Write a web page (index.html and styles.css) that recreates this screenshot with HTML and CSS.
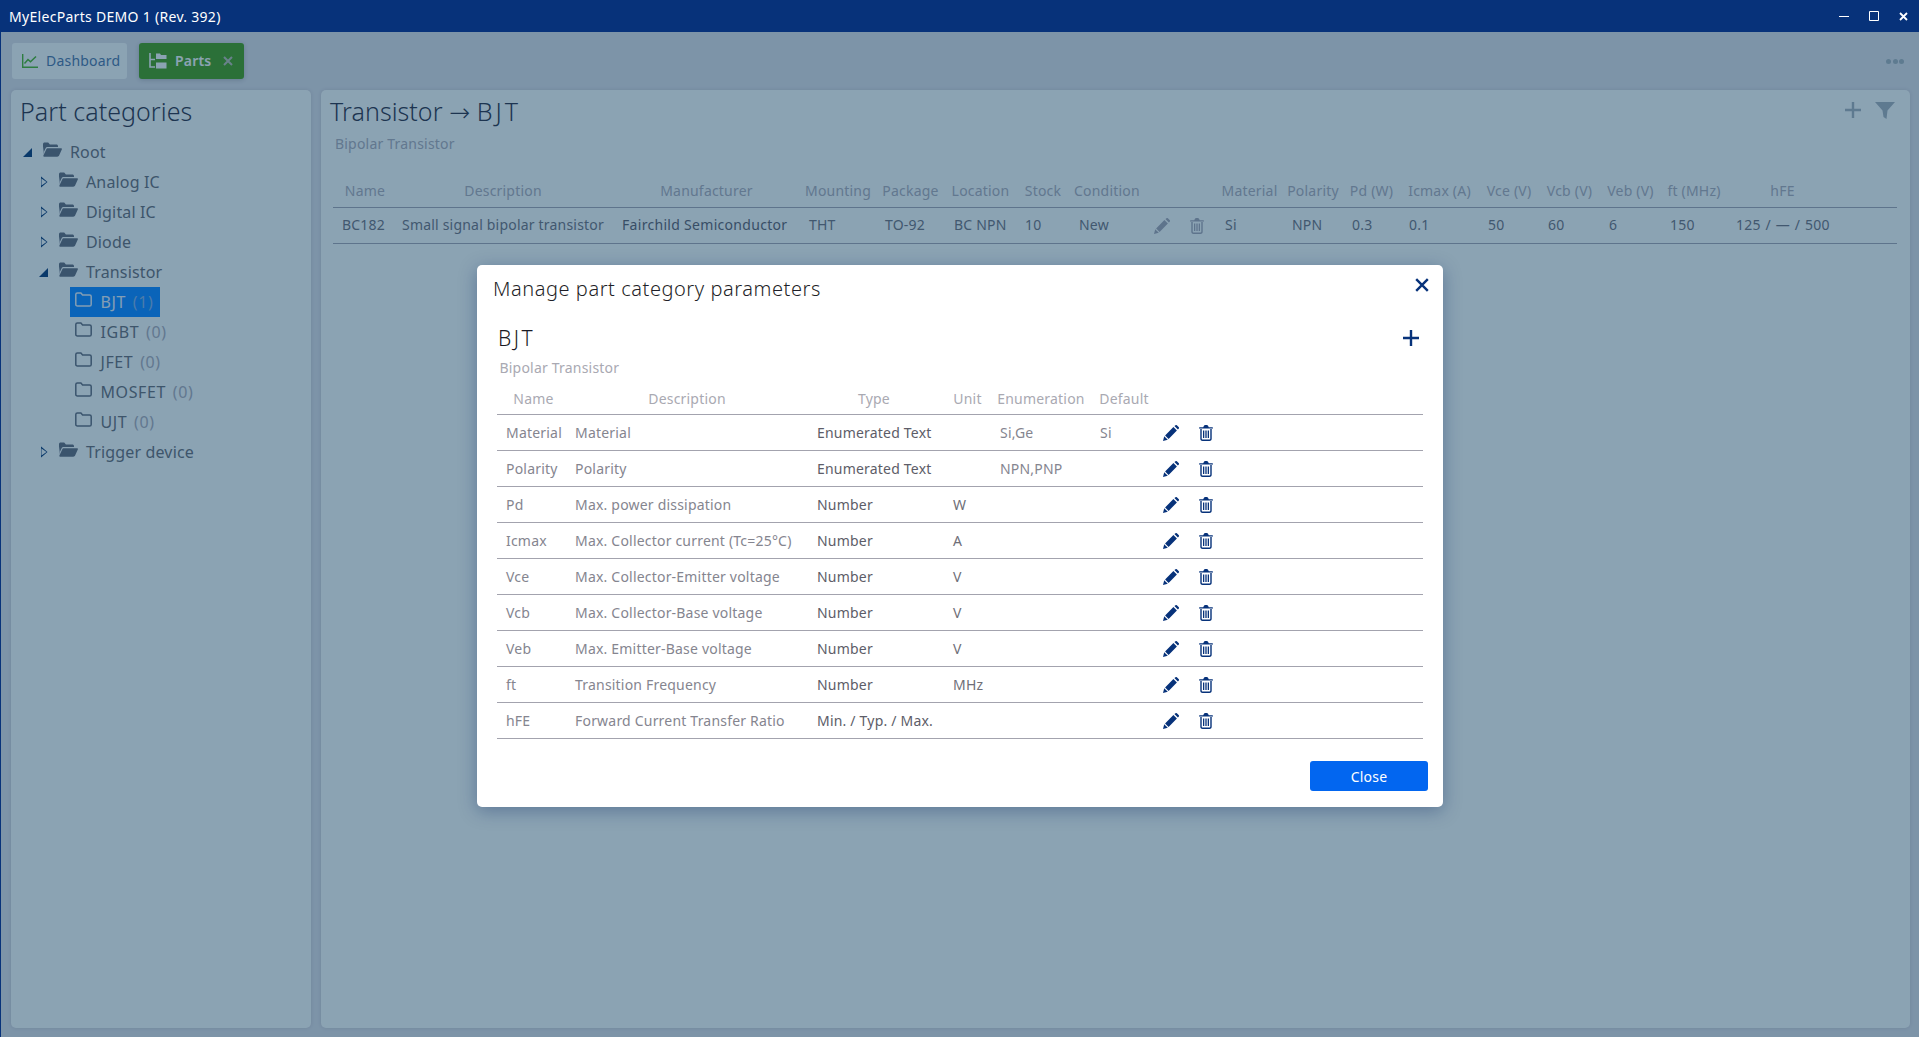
FILE: index.html
```html
<!DOCTYPE html>
<html lang="en">
<head>
  <meta charset="UTF-8" />
  <title>MyElecParts</title>
  <link rel="stylesheet" href="styles.css">
</head>
<body>
  <svg class="icon-defs" aria-hidden="true">
    <symbol id="icon-pencil" viewBox="0 0 16 16">
      <path d="M0 16 1.200 11.200 4.800 14.800Z M2.100 10.400 10.400 2.100 13.900 5.600 5.600 13.900Z M11.400 1.100 12.200.4a1.400 1.400 0 0 1 1.900 0l1.500 1.500a1.400 1.400 0 0 1 0 1.900l-.7.800Z"/>
    </symbol>
    <symbol id="icon-trash" viewBox="0 0 14 16">
      <path d="M4.200 2.200 5 .8C5.200.3 5.600 0 6.100 0h1.800c.5 0 .9.3 1.100.8l.8 1.400H13.300a.7.7 0 0 1 .7.700v.7H0v-.7a.7.7 0 0 1 .7-.7Z"/>
      <path d="M1.300 4h1.400v9.600c0 .6.4 1 1 1h6.600c.6 0 1-.4 1-1V4h1.400v9.700c0 1.300-1 2.300-2.300 2.300H3.600c-1.300 0-2.300-1-2.300-2.300Z"/>
      <path d="M4 5.500h1.300v7.500H4Z M6.350 5.500h1.300v7.500h-1.300Z M8.700 5.500H10v7.500H8.700Z"/>
    </symbol>
    <symbol id="icon-plus" viewBox="0 0 16 16">
      <path d="M6.800 0h2.400v6.800H16v2.400H9.200V16H6.800V9.200H0V6.800h6.800Z"/>
    </symbol>
    <symbol id="icon-folder-open" viewBox="0 0 19 15">
      <path d="M0 2.200C0 1.300.7.600 1.600.600h3.600l1.700 1.800h6.500c.9 0 1.600.7 1.600 1.600v1H4.800c-1 0-1.800.5-2.300 1.400L1 9.800V4.400L0 13Z"/>
      <path d="M4.800 6.200H18c.7 0 1.200.7.800 1.400l-2.700 6c-.3.700-1 1.200-1.800 1.200H1.200c-.7 0-1.100-.7-.8-1.300l2.800-6.100c.3-.7.900-1.200 1.600-1.200Z"/>
    </symbol>
    <symbol id="icon-folder" viewBox="0 0 17 15">
      <path d="M.8 2.600C.8 1.700 1.500 1 2.400 1h3.500l1.700 2h7c.9 0 1.600.7 1.600 1.600v7.800c0 .9-.7 1.600-1.600 1.600H2.400c-.9 0-1.600-.7-1.600-1.600Z" fill="none" stroke="currentColor" stroke-width="1.500"/>
    </symbol>
  </svg>

  <div class="window">
    <div class="titlebar">
      <span class="titlebar-name">MyElecParts DEMO 1 (Rev. 392)</span>
      <div class="window-buttons">
        <svg width="10" height="10" viewBox="0 0 10 10"><path d="M0 5.500h10" stroke="#fff" stroke-width="1"/></svg>
        <svg width="10" height="10" viewBox="0 0 10 10"><path d="M.5.500h9v9h-9Z" fill="none" stroke="#fff" stroke-width="1"/></svg>
        <svg width="9" height="9" viewBox="0 0 9 9"><path d="M1 1l7 7M8 1 1 8" stroke="#fff" stroke-width="1.800"/></svg>
      </div>
    </div>

    <div class="workspace">
      <div class="tabs">
        <div class="tab">
          <svg class="tab-icon" width="16" height="14" viewBox="0 0 16 14"><path d="M.7 0v13.300H16" fill="none" stroke="currentColor" stroke-width="1.400"/><path d="M2.500 9.500 6 5.500l2.500 2.300L14 2.500" fill="none" stroke="currentColor" stroke-width="1.500"/></svg>
          Dashboard
        </div>
        <div class="tab tab-active">
          <svg class="tab-icon" width="18" height="16" viewBox="0 0 18 16"><path d="M1 0v14h5M1 6.500h5" fill="none" stroke="currentColor" stroke-width="1.600"/><path d="M7 .5h4l1 1.500h5.500v4H7Z M7 9.500h10.500v6H7Z" fill="currentColor"/></svg>
          Parts
          <svg class="tab-close" width="10" height="10" viewBox="0 0 10 10"><path d="M1 1l8 8M9 1 1 9" stroke="currentColor" stroke-width="2"/></svg>
        </div>
        <div class="tabs-more"><i></i><i></i><i></i></div>
      </div>

      <div class="panels">
        <div class="panel panel-tree">
          <h2 class="panel-title">Part categories</h2>
          <ul class="tree">
            <li class="node"><span class="toggler open"></span><span class="node-label"><svg class="folder-open"><use href="#icon-folder-open"/></svg>Root</span></li>
            <li class="node level-1"><span class="toggler"></span><span class="node-label"><svg class="folder-open"><use href="#icon-folder-open"/></svg>Analog IC</span></li>
            <li class="node level-1"><span class="toggler"></span><span class="node-label"><svg class="folder-open"><use href="#icon-folder-open"/></svg>Digital IC</span></li>
            <li class="node level-1"><span class="toggler"></span><span class="node-label"><svg class="folder-open"><use href="#icon-folder-open"/></svg>Diode</span></li>
            <li class="node level-1"><span class="toggler open"></span><span class="node-label"><svg class="folder-open"><use href="#icon-folder-open"/></svg>Transistor</span></li>
            <li class="node level-2"><span class="toggler none"></span><span class="node-label selected"><svg class="folder"><use href="#icon-folder"/></svg>BJT&nbsp;<span class="count">(1)</span></span></li>
            <li class="node level-2"><span class="toggler none"></span><span class="node-label"><svg class="folder"><use href="#icon-folder"/></svg>IGBT&nbsp;<span class="count">(0)</span></span></li>
            <li class="node level-2"><span class="toggler none"></span><span class="node-label"><svg class="folder"><use href="#icon-folder"/></svg>JFET&nbsp;<span class="count">(0)</span></span></li>
            <li class="node level-2"><span class="toggler none"></span><span class="node-label"><svg class="folder"><use href="#icon-folder"/></svg>MOSFET&nbsp;<span class="count">(0)</span></span></li>
            <li class="node level-2"><span class="toggler none"></span><span class="node-label"><svg class="folder"><use href="#icon-folder"/></svg>UJT&nbsp;<span class="count">(0)</span></span></li>
            <li class="node level-1"><span class="toggler"></span><span class="node-label"><svg class="folder-open"><use href="#icon-folder-open"/></svg>Trigger device</span></li>
          </ul>
        </div>

        <div class="panel panel-parts">
          <div class="parts-head">
            <h2 class="panel-title">Transistor <span class="title-arrow">→</span> <span class="title-code">BJT</span></h2>
            <div class="parts-tools">
              <svg class="tool-plus"><use href="#icon-plus"/></svg>
              <svg class="tool-filter" width="20" height="17" viewBox="0 0 20 17"><path d="M0 0h20l-7.500 8.500L11.500 17 8.500 15 7.500 8.500Z"/></svg>
            </div>
          </div>
          <p class="subtitle parts-sub">Bipolar Transistor</p>
          <table class="grid parts-grid">
            <colgroup>
              <col class="w64"><col class="w220"><col class="w187"><col class="w76"><col class="w69"><col class="w71"><col class="w54"><col class="w69"><col class="w77"><col class="w67"><col class="w60"><col class="w57"><col class="w79"><col class="w60"><col class="w61"><col class="w61"><col class="w66"><col class="w103"><col>
            </colgroup>
            <thead>
              <tr><th>Name</th><th>Description</th><th>Manufacturer</th><th>Mounting</th><th>Package</th><th>Location</th><th>Stock</th><th>Condition</th><th></th><th>Material</th><th>Polarity</th><th>Pd (W)</th><th>Icmax (A)</th><th>Vce (V)</th><th>Vcb (V)</th><th>Veb (V)</th><th>ft (MHz)</th><th class="plain">hFE</th><th></th></tr>
            </thead>
            <tbody>
              <tr>
                <td>BC182</td><td>Small signal bipolar transistor</td><td class="strong">Fairchild Semiconductor</td><td>THT</td><td>TO-92</td><td>BC NPN</td><td>10</td><td>New</td>
                <td class="actions"><svg class="act-pencil"><use href="#icon-pencil"/></svg><svg class="act-trash"><use href="#icon-trash"/></svg></td>
                <td>Si</td><td>NPN</td><td>0.3</td><td>0.1</td><td>50</td><td>60</td><td>6</td><td>150</td><td class="hfe">125 / — / 500</td><td></td>
              </tr>
            </tbody>
          </table>
        </div>
      </div>
    </div>

    <div class="backdrop">
      <div class="modal">
        <div class="modal-head">
          <h3 class="modal-title">Manage part category parameters</h3>
          <svg class="modal-close" width="14" height="14" viewBox="0 0 14 14"><path d="M1.200 1.200l11.600 11.600M12.800 1.200 1.200 12.800" stroke="currentColor" stroke-width="2.400"/></svg>
        </div>
        <div class="modal-cat">
          <h4 class="cat-name">BJT</h4>
          <svg class="cat-add"><use href="#icon-plus"/></svg>
        </div>
        <p class="subtitle modal-sub">Bipolar Transistor</p>
        <table class="grid params-grid">
          <colgroup>
            <col class="w73"><col class="w242"><col class="w136"><col class="w47"><col class="w100"><col class="w58"><col>
          </colgroup>
          <thead>
            <tr><th>Name</th><th>Description</th><th class="th-type">Type</th><th>Unit</th><th>Enumeration</th><th class="plain">Default</th><th></th></tr>
          </thead>
          <tbody>
            <tr><td>Material</td><td>Material</td><td class="type">Enumerated Text</td><td class="unit"></td><td>Si,Ge</td><td>Si</td><td class="actions"><svg class="act-pencil"><use href="#icon-pencil"/></svg><svg class="act-trash"><use href="#icon-trash"/></svg></td></tr>
            <tr><td>Polarity</td><td>Polarity</td><td class="type">Enumerated Text</td><td class="unit"></td><td>NPN,PNP</td><td></td><td class="actions"><svg class="act-pencil"><use href="#icon-pencil"/></svg><svg class="act-trash"><use href="#icon-trash"/></svg></td></tr>
            <tr><td>Pd</td><td>Max. power dissipation</td><td class="type">Number</td><td class="unit">W</td><td></td><td></td><td class="actions"><svg class="act-pencil"><use href="#icon-pencil"/></svg><svg class="act-trash"><use href="#icon-trash"/></svg></td></tr>
            <tr><td>Icmax</td><td>Max. Collector current (Tc=25°C)</td><td class="type">Number</td><td class="unit">A</td><td></td><td></td><td class="actions"><svg class="act-pencil"><use href="#icon-pencil"/></svg><svg class="act-trash"><use href="#icon-trash"/></svg></td></tr>
            <tr><td>Vce</td><td>Max. Collector-Emitter voltage</td><td class="type">Number</td><td class="unit">V</td><td></td><td></td><td class="actions"><svg class="act-pencil"><use href="#icon-pencil"/></svg><svg class="act-trash"><use href="#icon-trash"/></svg></td></tr>
            <tr><td>Vcb</td><td>Max. Collector-Base voltage</td><td class="type">Number</td><td class="unit">V</td><td></td><td></td><td class="actions"><svg class="act-pencil"><use href="#icon-pencil"/></svg><svg class="act-trash"><use href="#icon-trash"/></svg></td></tr>
            <tr><td>Veb</td><td>Max. Emitter-Base voltage</td><td class="type">Number</td><td class="unit">V</td><td></td><td></td><td class="actions"><svg class="act-pencil"><use href="#icon-pencil"/></svg><svg class="act-trash"><use href="#icon-trash"/></svg></td></tr>
            <tr><td>ft</td><td>Transition Frequency</td><td class="type">Number</td><td class="unit">MHz</td><td></td><td></td><td class="actions"><svg class="act-pencil"><use href="#icon-pencil"/></svg><svg class="act-trash"><use href="#icon-trash"/></svg></td></tr>
            <tr><td>hFE</td><td>Forward Current Transfer Ratio</td><td class="type">Min. / Typ. / Max.</td><td class="unit"></td><td></td><td></td><td class="actions"><svg class="act-pencil"><use href="#icon-pencil"/></svg><svg class="act-trash"><use href="#icon-trash"/></svg></td></tr>
          </tbody>
        </table>
        <div class="modal-foot">
          <button class="btn-close" type="button">Close</button>
        </div>
      </div>
    </div>
  </div>
</body>
</html>
```

FILE: styles.css
```css
* {
  box-sizing: border-box;
}
html, body {
  height: 100%;
}
body {
  margin: 0;
  font-family: "Noto Sans", "Open Sans", sans-serif;
  font-size: 14px;
  letter-spacing: 0.2px;
  color: #686b71;
  overflow: hidden;
}
h2, h3, h4, p, ul {
  margin: 0;
  padding: 0;
}
.icon-defs {
  display: none;
}
.window {
  position: relative;
  width: 100%;
  height: 100%;
  overflow: hidden;
  display: flex;
  flex-direction: column;
  border-left: 1px solid #07327a;
  background-color: #dbdce1;
}

/* title bar */
.titlebar {
  height: 32px;
  flex: none;
  margin-left: -1px;
  padding: 0 9px;
  display: flex;
  align-items: center;
  justify-content: space-between;
  background-color: #07327a;
  color: #fff;
  font-size: 14px;
  letter-spacing: 0.3px;
}
.window-buttons {
  display: flex;
  align-items: center;
  gap: 20px;
  padding-right: 2px;
}

/* tabs */
.workspace {
  flex: 1;
  min-height: 0;
  display: flex;
  flex-direction: column;
  padding: 11px 9px 9px 10px;
}
.tabs {
  height: 36px;
  flex: none;
  display: flex;
  align-items: stretch;
  gap: 12px;
  padding-left: 1px;
}
.tab {
  display: flex;
  align-items: center;
  gap: 8px;
  width: 115px;
  padding: 0 0 1px 10px;
  border-radius: 3px;
  background-color: #f5f7f5;
  color: #4b73a0;
}
.tab-icon {
  color: #4ab224;
}
.tab-active {
  width: 105px;
  background-color: #469c14;
  color: #f5f7f5;
  font-weight: 600;
  box-shadow: 0 1px 5px rgba(0, 0, 0, 0.2);
}
.tab-active .tab-icon {
  color: #f5f7f5;
}
.tab-close {
  margin-left: 4px;
  color: #b7bbad;
}
.tabs-more {
  margin-left: auto;
  padding-right: 6px;
  display: flex;
  align-items: center;
  gap: 1.5px;
}
.tabs-more i {
  width: 5px;
  height: 5px;
  border-radius: 50%;
  background-color: #a3afb5;
}

/* panels */
.panels {
  flex: 1;
  min-height: 0;
  display: flex;
  gap: 10px;
  margin-top: 11px;
}
.panel {
  background-color: #f5f7f5;
  border-radius: 5px;
  padding: 0 9px;
  box-shadow: 0 0 4px rgba(0, 0, 0, 0.12);
}
.panel-tree {
  width: 300px;
  flex: none;
}
.panel-parts {
  flex: 1;
  padding-right: 13px;
}
.panel-title {
  height: 42px;
  line-height: 42px;
  font-size: 25px;
  font-weight: 300;
  letter-spacing: 0.05px;
  color: #2d2f40;
  white-space: nowrap;
}
.title-arrow {
  font-family: "DejaVu Sans", sans-serif;
  font-size: 25px;
  font-weight: 200;
}
.title-code {
  letter-spacing: 3px;
}
.subtitle {
  height: 20px;
  line-height: 20px;
  color: #a9a9b2;
}

/* tree */
.tree {
  list-style: none;
  margin-top: 5px;
  font-size: 16px;
  letter-spacing: 0.15px;
}
.node {
  height: 30px;
  display: flex;
  align-items: center;
  margin-left: -2.5px;
}
.level-1 {
  padding-left: 16px;
}
.level-2 {
  padding-left: 32px;
  letter-spacing: 0.6px;
}
.toggler {
  width: 20.5px;
  flex: none;
  height: 30px;
  position: relative;
}
.toggler::after {
  content: "";
  position: absolute;
  left: 7px;
  top: 9px;
  width: 7px;
  height: 12px;
  background-color: #083770;
  clip-path: polygon(0 0, 100% 50%, 0 100%, 0 0, 14% 20%, 14% 80%, 86% 50%, 14% 20%);
}
.toggler.open::after {
  left: 5.5px;
  top: 11px;
  width: 9px;
  height: 9px;
  clip-path: polygon(100% 0, 100% 100%, 0 100%);
}
.toggler.none::after {
  display: none;
}
.node-label {
  height: 30px;
  display: inline-flex;
  align-items: center;
  padding: 0 5px;
  white-space: pre;
}
.folder-open {
  width: 19px;
  height: 15px;
  margin: -5px 8px 0 0;
  fill: #616976;
}
.folder {
  width: 17px;
  height: 15px;
  margin: -6px 8.5px 0 0;
  color: #616976;
}
.count {
  margin-left: 2px;
  color: #a9a9b2;
}
.selected {
  padding-right: 7px;
  background-color: #0a85ff;
  color: #e6eef6;
}
.selected .folder {
  color: #e6eef6;
}
.selected .count {
  color: #7fb0e6;
}

/* parts list */
.parts-head {
  display: flex;
  justify-content: space-between;
}
.parts-tools {
  display: flex;
  align-items: flex-start;
  gap: 14px;
  padding-top: 12px;
  margin-right: 2px;
}
.tool-plus {
  width: 16px;
  height: 16px;
  fill: #a3adb5;
}
.tool-filter {
  fill: #a3adb5;
}
.parts-sub {
  margin: 2px 0 22px 5px;
}
.parts-grid {
  width: 1564px;
  margin-left: 3px;
}

/* shared table look */
.grid {
  table-layout: fixed;
  border-collapse: separate;
  border-spacing: 0;
}
.grid th {
  height: 32px;
  padding: 0 8px 0 0;
  font-weight: 400;
  text-align: center;
  color: #a9a9b2;
  border-bottom: 1px solid #a3a3ae;
  white-space: nowrap;
}
.grid th:first-child, .grid th.plain {
  padding: 0;
}
.grid th.th-type {
  padding-right: 12px;
}
.grid td {
  height: 36px;
  padding: 0 5px;
  color: #85858f;
  border-bottom: 1px solid #a3a3ae;
  white-space: nowrap;
}
.grid td:first-child {
  padding-left: 9px;
}
.parts-grid th, .parts-grid td,
.parts-grid th:first-child, .parts-grid th.plain {
  padding-bottom: 2px;
}
.parts-grid td {
  color: #6f7079;
}
.grid td.strong, .grid td.type {
  color: #5d5d68;
}
.grid td.strong {
  letter-spacing: 0.3px;
}
.grid td.unit {
  color: #6f6f78;
}
.grid td.hfe {
  word-spacing: 1px;
}
.grid td.actions {
  padding: 0 0 2px 11px;
}
.actions svg {
  display: inline-block;
  vertical-align: middle;
}
.act-pencil {
  width: 16px;
  height: 16px;
  margin-right: 20px;
  fill: #a3a3ae;
}
.act-trash {
  width: 14px;
  height: 16px;
  fill: #a3a3ae;
}
.w47 { width: 47px; }
.w54 { width: 54px; }
.w57 { width: 57px; }
.w58 { width: 58px; }
.w60 { width: 60px; }
.w61 { width: 61px; }
.w64 { width: 64px; }
.w66 { width: 66px; }
.w67 { width: 67px; }
.w69 { width: 69px; }
.w71 { width: 71px; }
.w73 { width: 73px; }
.w76 { width: 76px; }
.w77 { width: 77px; }
.w79 { width: 79px; }
.w100 { width: 100px; }
.w103 { width: 103px; }
.w136 { width: 136px; }
.w187 { width: 187px; }
.w220 { width: 220px; }
.w242 { width: 242px; }

/* dialog */
.backdrop {
  position: absolute;
  top: 32px;
  left: 0;
  right: 0;
  bottom: 0;
  background-color: rgba(10, 60, 100, 0.45);
}
.modal {
  width: 966px;
  height: 542px;
  margin: 233px 0 0 476px;
  padding: 0 15px 15px 20px;
  background-color: #fff;
  border-radius: 5px;
  box-shadow: 0 4px 18px rgba(10, 40, 100, 0.35);
  display: flex;
  flex-direction: column;
}
.modal-head {
  height: 46px;
  flex: none;
  margin-left: -4px;
  display: flex;
  align-items: center;
  justify-content: space-between;
}
.modal-title {
  font-size: 20px;
  font-weight: 300;
  letter-spacing: 0.55px;
  color: #1f1f28;
}
.modal-close {
  color: #07327a;
  margin: -6px -1px 0 0;
}
.modal-cat {
  height: 28px;
  margin-top: 13px;
  flex: none;
  display: flex;
  align-items: center;
  justify-content: space-between;
  padding-right: 9px;
}
.cat-name {
  font-size: 21px;
  font-weight: 300;
  letter-spacing: 2.5px;
  margin-left: 1px;
  color: #1a1a24;
}
.cat-add {
  width: 16px;
  height: 16px;
  fill: #07327a;
}
.modal-sub {
  margin: 6px 0 5px 2.5px;
  flex: none;
}
.params-grid {
  width: 926px;
  flex: none;
}
.params-grid td.actions {
  padding-left: 10px;
}
.params-grid .act-pencil, .params-grid .act-trash {
  fill: #07327a;
}
.modal-foot {
  margin-top: 22px;
  display: flex;
  justify-content: flex-end;
}
.btn-close {
  width: 118px;
  height: 30px;
  border: 0;
  border-radius: 3px;
  background-color: #0266f0;
  color: #fff;
  font: inherit;
  letter-spacing: inherit;
}
```
